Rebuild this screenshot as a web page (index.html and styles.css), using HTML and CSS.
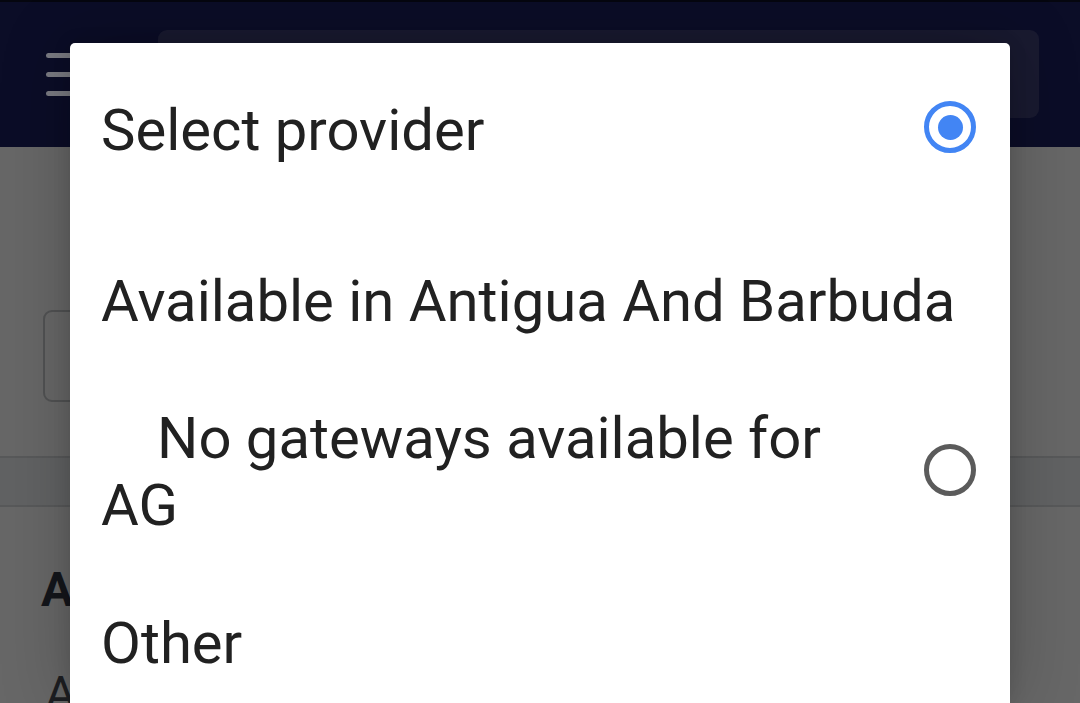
FILE: index.html
```html
<!DOCTYPE html>
<html lang="en">
<head>
<meta charset="utf-8">
<title>Select provider</title>
<link rel="stylesheet" href="styles.css">
</head>
<body>
<div class="page">
  <header class="topbar">
    <div class="menu-btn" aria-label="Menu">
      <span></span><span></span><span></span>
    </div>
    <div class="search"></div>
  </header>
  <main class="content">
    <div class="field"></div>
    <div class="band"></div>
    <div class="heading">A</div>
    <div class="subline">A</div>
  </main>
</div>

<div class="dialog" role="dialog">
  <div class="row title-row">
    <div class="label">Select provider</div>
    <div class="radio checked title-radio"><span class="dot"></span></div>
  </div>
  <div class="row group-row">
    <div class="label">Available in Antigua And Barbuda</div>
  </div>
  <div class="row option-row">
    <div class="label indented">No gateways available for AG</div>
    <div class="radio option-radio"></div>
  </div>
  <div class="row other-row">
    <div class="label">Other</div>
  </div>
</div>
</body>
</html>
```

FILE: styles.css
```css
html, body {
  margin: 0;
  padding: 0;
}
body {
  width: 1080px;
  height: 703px;
  overflow: hidden;
  background: #676767;
  font-family: Roboto, "Noto Sans", "Liberation Sans", sans-serif;
  position: relative;
}

.page {
  display: flex;
  flex-direction: column;
  height: 703px;
  overflow: hidden;
}

.topbar {
  height: 147px;
  box-sizing: border-box;
  background: #0b0d27;
  border-top: 2px solid #05060f;
  display: flex;
  align-items: flex-start;
  padding: 28px 41px 0 46px;
  flex-shrink: 0;
}

.menu-btn {
  width: 40px;
  display: flex;
  flex-direction: column;
  gap: 14px;
  padding-top: 23px;
  margin-right: 72px;
}
.menu-btn span {
  display: block;
  height: 5px;
  border-radius: 3px;
  background: #7a7b82;
}

.search {
  flex: 1;
  height: 88px;
  border-radius: 9px;
  background: #191a30;
}

.content {
  flex: 1;
  min-height: 0;
  overflow: hidden;
  display: flex;
  flex-direction: column;
  padding-top: 163px;
}

.field {
  margin-left: 43px;
  width: 200px;
  height: 92px;
  flex-shrink: 0;
  box-sizing: border-box;
  border: 2px solid #515253;
  border-radius: 9px;
}

.band {
  margin-top: 54px;
  height: 51px;
  flex-shrink: 0;
  box-sizing: border-box;
  background: #616263;
  border-top: 2px solid #58595a;
  border-bottom: 2px solid #58595a;
}

.heading {
  margin-top: 55px;
  margin-left: 41px;
  font-size: 48px;
  font-weight: 700;
  line-height: 56px;
  color: #14161b;
  flex-shrink: 0;
}

.subline {
  margin-top: 48px;
  margin-left: 45px;
  font-size: 48px;
  line-height: 56px;
  color: #1d1e22;
  flex-shrink: 0;
}

/* Dialog */
.dialog {
  position: absolute;
  left: 70px;
  top: 43px;
  bottom: 0;
  width: 940px;
  box-sizing: border-box;
  background: #ffffff;
  border-radius: 5px 5px 0 0;
  box-shadow: 0 0 70px rgba(0, 0, 0, 0.22), 0 0 18px rgba(0, 0, 0, 0.12);
  padding: 54px 34px 0 31px;
  display: flex;
  flex-direction: column;
  color: #212121;
  overflow: hidden;
}

.row {
  display: flex;
  align-items: center;
  flex-shrink: 0;
}

.label {
  flex: 1;
  font-size: 58px;
  line-height: 67px;
}

.indented {
  text-indent: 56px;
}

.group-row {
  margin-top: 104px;
}
.option-row {
  margin-top: 70px;
}
.other-row {
  margin-top: 71px;
}

.radio {
  width: 52px;
  height: 52px;
  box-sizing: border-box;
  border-radius: 50%;
  border: 5px solid #5b5b5b;
  margin-left: 32px;
  flex-shrink: 0;
  display: flex;
  align-items: center;
  justify-content: center;
}
.radio.checked {
  border-color: #4285f4;
}
.radio .dot {
  width: 25px;
  height: 25px;
  border-radius: 50%;
  background: #4285f4;
}
.title-radio {
  margin-bottom: 7px;
}
.option-radio {
  margin-bottom: 5px;
}
```
